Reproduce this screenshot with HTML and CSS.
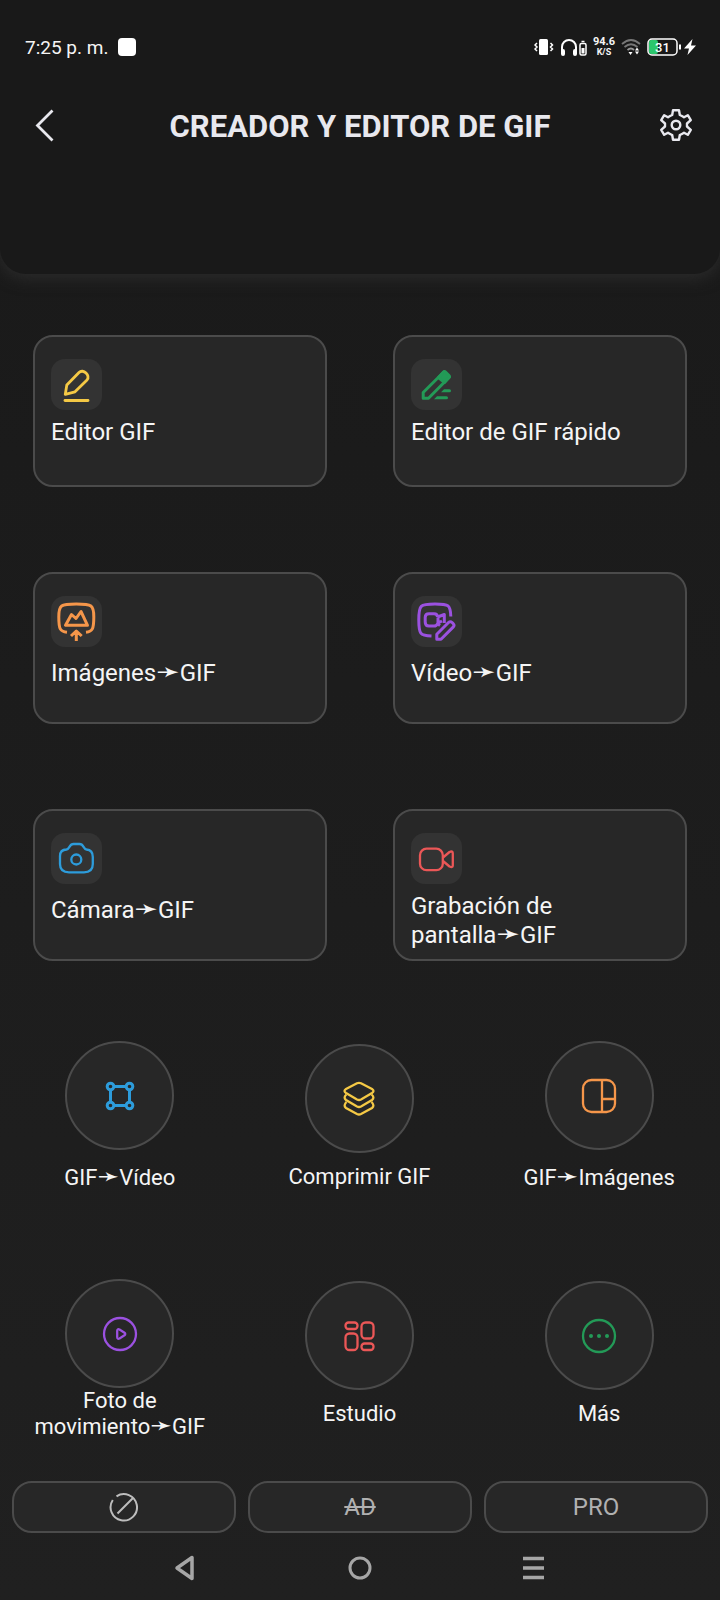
FILE: index.html
```html
<!DOCTYPE html>
<html lang="es">
<head>
<meta charset="utf-8">
<meta name="viewport" content="width=device-width, initial-scale=1">
<title>Creador y editor de GIF</title>
<link rel="stylesheet" href="styles.css">
</head>
<body>
<header class="header">
  <div class="status">
    <div class="status-left"><span>7:25 p. m.</span><span class="status-app"></span></div>
    <div class="status-right">
      <svg width="20" height="18" viewBox="0 0 20 18"><rect x="5" y="1" width="9" height="16" rx="1.500" fill="#fff"/><path d="M3 5 1 7l2 2-2 2 2 2M16.500 5l2 2-2 2 2 2-2 2" fill="none" stroke="#fff" stroke-width="1.500"/></svg>
      <svg width="27" height="18" viewBox="0 0 27 18"><path d="M2 15V9a7 7 0 0 1 14 0v6" fill="none" stroke="#fff" stroke-width="2"/><rect x="1" y="11" width="4" height="7" rx="2" fill="#fff"/><rect x="13" y="11" width="4" height="7" rx="2" fill="#fff"/><rect x="20" y="5.500" width="6" height="11.500" rx="1.500" fill="none" stroke="#fff" stroke-width="1.500"/><path d="M21.500 3.500h3" stroke="#fff" stroke-width="1.500"/><rect x="21.500" y="10" width="3" height="5.500" fill="#fff"/></svg>
      <span class="speed">94.6<br><span class="speed-unit">K/S</span></span>
      <svg width="20" height="18" viewBox="0 0 20 18"><g fill="none" stroke="#777" stroke-width="1.800"><path d="M1 6q9-8 18 0M3.500 9q6.500-5.500 13 0"/><path d="M6.500 12q3.500-3 6.500 0" stroke="#999"/></g><path d="M7.500 14h4l-2 3zM14 12.500l2-3 2 3zM14 13.500h4l-2 3z" fill="#fff"/></svg>
      <svg class="battery" width="35" height="18" viewBox="0 0 35 18"><rect x="2" y="2" width="9" height="14" rx="2" fill="#2bc66c"/><rect x="1" y="1" width="29" height="16" rx="4" fill="none" stroke="#fff" stroke-width="1.500"/><path d="M33 6.500v5" stroke="#fff" stroke-width="2"/><text x="15.500" y="13.500" text-anchor="middle" fill="#fff" font-size="13">31</text></svg>
      <svg width="12" height="18" viewBox="0 0 12 18"><path d="M8.500 1 0 10.500h5L3.500 17 12 7.500H7z" fill="#fff"/></svg>
    </div>
  </div>
  <div class="titlebar">
    <button class="icon-btn" aria-label="Atrás"><svg width="36" height="36" viewBox="0 0 36 36"><path d="M26.500 2.500 11.500 17.500 26.500 32.500" fill="none" stroke="#e8e8ee" stroke-width="2.800"/></svg></button>
    <h1 class="title">CREADOR Y EDITOR DE GIF</h1>
    <button class="icon-btn" aria-label="Ajustes"><svg width="36" height="36" viewBox="-18 -17 36 36" fill="none" stroke="#e8e8ee" stroke-width="2.400"><path d="M-3-14.800H3L3.800-10Q6-9 8-7.700L11.800-9.800 14.800-4.800 11-1.500V1.500L14.800 4.800 11.800 9.800 8 7.700Q6 9 3.800 10L3 14.800H-3L-3.800 10Q-6 9-8 7.700L-11.800 9.800-14.800 4.800-11 1.500V-1.500L-14.800-4.800-11.800-9.800-8-7.700Q-6-9-3.800-10Z" stroke-linejoin="round"/><circle r="4.300"/></svg></button>
  </div>
</header>
<main>
  <section class="cards">
    <button class="card"><span class="badge yellow"><svg viewBox="0 0 51 51" stroke-width="2.800"><path d="M14.300 35.300 15.800 26 28 13.500C30 11.500 33 12 35 14 37.500 16.500 37.500 19 36 21L24 32.800Z" stroke-linejoin="round"/><path d="M14 41.500H37" stroke-linecap="round"/></svg></span><span class="card-label">Editor GIF</span></button>
    <button class="card"><span class="badge green"><svg viewBox="0 0 51 51" stroke-width="3" stroke-linejoin="round"><path d="M12.200 39.200V33.500L33 12.800 38.500 18 17.500 39.200Z"/><path d="M27.500 18.500 32.500 13Q33.500 12 34.500 13L38 16.500Q39 17.500 38 18.500L33.500 23.500Z" fill="currentColor"/><path d="M33 30.200H38.500a1.500 1.500 0 0 1 0 3H30zM26 37.200H35.500a1.500 1.500 0 0 1 0 3H23z" fill="currentColor" stroke="none"/></svg></span><span class="card-label">Editor de GIF rápido</span></button>
    <button class="card card-arrow"><span class="badge orange"><svg viewBox="0 0 51 51" stroke-width="3" stroke-linejoin="round"><path d="M16 36.200C9 35.500 7.800 33 7.800 21 7.800 9 9.500 8 25.300 8 41 8 42.800 9 42.800 21 42.800 33 41.500 35.500 35 36.200M14.500 29.300H36.500L30 15.500 25 22.500 20.500 18.500ZM25.300 45V35.500M20 40 25.300 35 30.700 40"/></svg></span><span class="card-label">Imágenes<span class="arrow">➛</span>GIF</span></button>
    <button class="card card-arrow"><span class="badge purple"><svg viewBox="0 0 51 51" stroke-width="3" stroke-linejoin="round"><path d="M20.500 40C9 39.500 7.800 38 7.800 24 7.800 9 9 8 24 8 38 8 39.500 9 39.800 20.500"/><path d="M26.500 21Q26.500 17.800 23 17.800H18Q14.200 17.800 14.200 21.500V26Q14.200 30 18 30H23Q25.500 30 26.500 27.800L29 29.500M26.500 21 33.300 18.500V27M27 21.500V27L31 25"/><path d="M25.800 43.200V38.200L37.500 26.500q1.800-1.600 3.600 0l1 1q1.800 1.800 0 3.600L30 43.200Z"/></svg></span><span class="card-label">Vídeo<span class="arrow">➛</span>GIF</span></button>
    <button class="card card-arrow"><span class="badge blue"><svg viewBox="0 0 51 51" stroke-width="2.300"><path d="M9 23Q9 16.800 15.500 16.500C19 16 18 11 22.500 11H28.500C33 11 32 16 35.500 16.500Q41.800 17 41.800 24V31Q41.800 39.300 33 39.300H18Q9 39.300 9 31Z"/><circle cx="25.300" cy="26.500" r="5"/></svg></span><span class="card-label">Cámara<span class="arrow">➛</span>GIF</span></button>
    <button class="card"><span class="badge red"><svg viewBox="0 0 51 51" stroke-width="2.300" stroke-linejoin="round"><rect x="9" y="15.700" width="22.800" height="21.500" rx="6.500"/><path d="M32 24.500 38.500 19Q41.800 17.500 41.800 20.500V32.500Q41.800 35 38.500 33.500L32 28"/></svg></span><span class="card-label">Grabación de pantalla<span class="arrow">➛</span>GIF</span></button>
  </section>
  <section class="tools">
    <button class="tool tool-arrow"><span class="disc blue"><svg viewBox="-18 -18 36 36" stroke-width="3"><path d="M-6-9.500H6M-6 9.500H6M-9.500-6V6M9.500-6V6"/><circle cx="-9.500" cy="-9.500" r="3.300"/><circle cx="9.500" cy="-9.500" r="3.300"/><circle cx="-9.500" cy="9.500" r="3.300"/><circle cx="9.500" cy="9.500" r="3.300"/></svg></span><span class="tool-label">GIF<span class="arrow">➛</span>Vídeo</span></button>
    <button class="tool"><span class="disc yellow"><svg viewBox="-18 -18 36 36" stroke-width="2.300"><path d="M-2-15.700Q0-16.700 2-15.700L13-10Q16-8 13-6L2 .500Q0 1.500-2 .500L-13-6Q-16-8-13-10Z"/><path d="M-12.500-4.500Q-16-1.500-13 1L-2 7.500Q0 8.500 2 7.500L13 1Q16-1.500 12.500-4.500M-12.500 3Q-16 6.500-13 9L-2 15Q0 16 2 15L13 9Q16 6.500 12.500 3"/></svg></span><span class="tool-label">Comprimir GIF</span></button>
    <button class="tool tool-arrow"><span class="disc orange"><svg viewBox="-18 -18 36 36" stroke-width="2.300"><rect x="-16" y="-16" width="32" height="32" rx="8.500"/><path d="M3-16V16M3 3H16"/></svg></span><span class="tool-label">GIF<span class="arrow">➛</span>Imágenes</span></button>
    <button class="tool tool-double"><span class="disc purple"><svg viewBox="-18 -18 36 36" stroke-width="2.300" stroke-linejoin="round"><circle r="16"/><path d="M-2.800-3Q-2.800-5.500-.500-4.500L4.500-1.300Q6 0 4.500 1.300L-.500 4.500Q-2.800 5.500-2.800 3Z"/></svg></span><span class="tool-label">Foto de movimiento<span class="arrow">➛</span>GIF</span></button>
    <button class="tool"><span class="disc red"><svg viewBox="-18 -18 36 36" stroke-width="2.300"><rect x="-13.500" y="-13.500" width="12" height="6.500" rx="3"/><rect x="-13.500" y="-2.500" width="12" height="16.500" rx="4"/><rect x="2.500" y="-13.500" width="12" height="16" rx="4"/><rect x="2.500" y="7.500" width="12" height="6.500" rx="3"/></svg></span><span class="tool-label">Estudio</span></button>
    <button class="tool"><span class="disc green"><svg viewBox="-18 -18 36 36" stroke-width="2.300"><circle r="16"/><g fill="currentColor" stroke="none"><circle cx="-8" r="2"/><circle r="2"/><circle cx="8" r="2"/></g></svg></span><span class="tool-label">Más</span></button>
  </section>
</main>
<footer>
  <div class="actions">
    <button class="action" aria-label="Sin marca"><svg width="30" height="30" viewBox="-15 -15 30 30" fill="none" stroke="#bdbdbd" stroke-width="2"><path d="M-7.500-10.700A13.200 13.200 0 1 1-11.200-7M-6.500 6.500 9.500-9.500"/></svg></button>
    <button class="action"><s>AD</s></button>
    <button class="action">PRO</button>
  </div>
  <nav class="nav">
    <button class="nav-btn" aria-label="Volver"><svg width="28" height="28" viewBox="-14 -14 28 28"><path d="M6-10.500V10.500L-9 0Z" fill="none" stroke="#a6a6a6" stroke-width="3.500" stroke-linejoin="round"/></svg></button>
    <button class="nav-btn" aria-label="Inicio"><svg width="28" height="28" viewBox="-14 -14 28 28"><circle r="10" fill="none" stroke="#a6a6a6" stroke-width="3"/></svg></button>
    <button class="nav-btn" aria-label="Recientes"><svg width="28" height="28" viewBox="-14 -14 28 28"><path d="M-11-9.500H10M-11 0H10M-11 9.500H10" stroke="#a6a6a6" stroke-width="3.500"/></svg></button>
  </nav>
</footer>
</body>
</html>
```

FILE: styles.css
```css
* { box-sizing: border-box; }

body {
  margin: 0;
  min-height: 100vh;
  background: linear-gradient(#191919, #202020);
  color: #f5f5f5;
  font-family: Roboto, "DejaVu Sans", sans-serif;
}

button {
  margin: 0;
  padding: 0;
  border: 0;
  background: none;
  color: inherit;
  font: inherit;
}

svg { display: block; }

.header {
  height: 274px;
  border-radius: 0 0 26px 26px;
  background: #191919;
  box-shadow: 0 4px 16px #2c2c2c;
}

.status {
  display: flex;
  justify-content: space-between;
  height: 94px;
  padding: 0 24px 0 25px;
  align-items: center;
  font-size: 19px;
}

.status-left, .status-right { display: flex; align-items: center; }
.status-left { gap: 10px; }
.status-right { gap: 6px; }
.status-app { width: 18px; height: 18px; border-radius: 4px; background: #fff; }
.speed { font-size: 11px; line-height: 10px; font-weight: 700; text-align: center; }
.speed-unit { font-size: 9px; }
.battery { margin-right: -4px; font-weight: 500; }

.titlebar {
  display: flex;
  align-items: center;
  justify-content: space-between;
  height: 64px;
  padding: 0 26px;
}

.icon-btn { width: 36px; height: 36px; }

.title {
  margin: 0;
  padding-top: 1px;
  color: #e8e8ee;
  font-size: 31px;
  font-weight: 700;
  line-height: 36px;
}

.arrow {
  font-family: "DejaVu Sans", sans-serif;
  font-size: 28px;
  line-height: 0;
}

.cards {
  display: grid;
  grid-template-columns: 1fr 1fr;
  gap: 85px 66px;
  padding: 61px 33px 80px;
}

.card {
  display: flex;
  flex-direction: column;
  align-items: flex-start;
  justify-content: flex-start;
  gap: 8px;
  height: 152px;
  padding: 22px 16px 0;
  border: 2px solid #4b4b4b;
  border-radius: 20px;
  background: #272727;
  text-align: left;
}

.card-arrow { gap: 12px; }
.card-label { font-size: 24px; line-height: 29px; }

.badge {
  width: 51px;
  height: 51px;
  border-radius: 14px;
  background: #333;
}

.badge svg, .disc svg { fill: none; stroke: currentColor; }

.yellow { color: #f5c945; }
.green { color: #239a57; }
.orange { color: #f5964a; }
.purple { color: #9b51e0; }
.blue { color: #2d9cdb; }
.red { color: #eb5757; }

.tools {
  display: grid;
  grid-template-columns: repeat(3, 1fr);
  grid-auto-rows: 237px;
  padding-right: 1px;
}

.tool {
  display: flex;
  flex-direction: column;
  align-items: center;
  justify-content: flex-start;
  gap: 11px;
  padding: 3px 30px 0;
}

.tool-arrow { gap: 15px; padding-top: 0; }
.tool-double { gap: 0; padding-top: 1px; }
.tool-label { font-size: 22px; line-height: 26px; }
.tool-label .arrow { font-size: 26px; }

.disc {
  display: grid;
  place-items: center;
  width: 109px;
  height: 109px;
  border: 2px solid #4b4b4b;
  border-radius: 50%;
  background: #272727;
}

.disc svg { width: 36px; height: 36px; }

.actions {
  display: grid;
  grid-template-columns: repeat(3, 1fr);
  gap: 12px;
  margin-top: -34px;
  padding: 0 12px;
}

.action {
  display: grid;
  place-items: center;
  height: 52px;
  border: 2px solid #4b4b4b;
  border-radius: 20px;
  background: #272727;
  color: #b0b0b0;
  font-size: 24px;
}

.nav {
  display: flex;
  justify-content: center;
  gap: 130px;
  height: 67px;
  padding-top: 13px;
}

.nav-btn { display: grid; place-items: center; width: 44px; height: 44px; }
```
